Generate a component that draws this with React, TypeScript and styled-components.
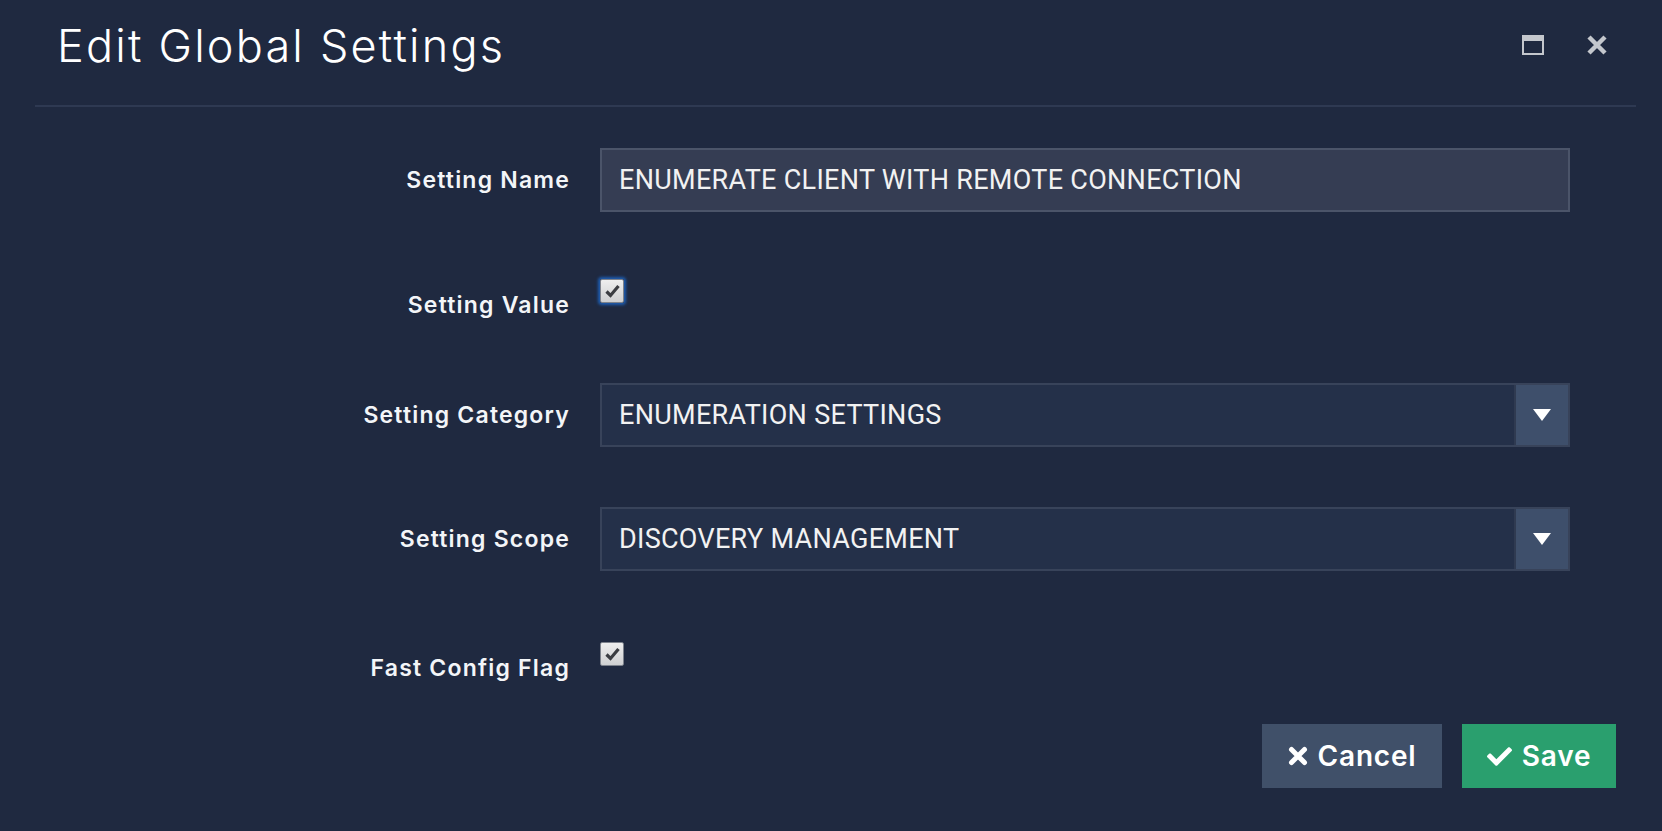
import { createGlobalStyle } from 'styled-components';
import styled from 'styled-components';
import { FaCheck } from 'react-icons/fa';

const GlobalStyle = createGlobalStyle`
  html, body {
    margin: 0;
    padding: 0;
    background: #1f2940;
  }
  #root {
    min-height: 100vh;
  }
`;

export default function App() {
  return (
    <>
      <GlobalStyle />
      <Modal>
        <Header>
          <Title>Edit Global Settings</Title>
          <HeaderTools>
            <ToolButton aria-label="maximize">
              <svg width="22" height="20" viewBox="0 0 22 20">
                <rect x="1" y="1" width="20" height="18" fill="none" stroke="#c4c7cd" strokeWidth="2" />
                <rect x="0" y="0" width="22" height="6" fill="#c4c7cd" />
              </svg>
            </ToolButton>
            <ToolButton aria-label="close">
              <svg width="22" height="20" viewBox="0 0 22 20">
                <path d="M3 2 L19 18 M19 2 L3 18" stroke="#c4c7cd" strokeWidth="4.5" strokeLinecap="butt" />
              </svg>
            </ToolButton>
          </HeaderTools>
        </Header>

        <Form>
          <Row>
            <Label>Setting Name</Label>
            <TextInput>ENUMERATE CLIENT WITH REMOTE CONNECTION</TextInput>
          </Row>
          <CheckRow>
            <CheckLabel>Setting Value</CheckLabel>
            <Checkbox focused />
          </CheckRow>
          <Row>
            <Label>Setting Category</Label>
            <Select value="ENUMERATION SETTINGS" />
          </Row>
          <Row>
            <Label>Setting Scope</Label>
            <Select value="DISCOVERY MANAGEMENT" />
          </Row>
          <CheckRow offset={4}>
            <CheckLabel>Fast Config Flag</CheckLabel>
            <Checkbox />
          </CheckRow>
        </Form>

        <Footer>
          <Button variant="cancel">
            <svg width="20" height="20" viewBox="0 0 20 20">
              <path d="M3.5 3.5 L16.5 16.5 M16.5 3.5 L3.5 16.5" stroke="#ffffff" strokeWidth="5" strokeLinecap="round" />
            </svg>
            Cancel
          </Button>
          <Button variant="save">
            <FaCheck size={25} />
            Save
          </Button>
        </Footer>
      </Modal>
    </>
  );
}

const Checkbox = ({ focused }: { focused?: boolean }) => (
  <CheckBox focused={focused}>
    <svg width="15" height="14" viewBox="0 0 15 14">
      <path d="M1.5 7.5 L5.5 11.5 L13.5 2" fill="none" stroke="#3b3d42" strokeWidth="3.2" />
    </svg>
  </CheckBox>
);

const Select = ({ value }: { value: string }) => (
  <SelectBox>
    <SelectValue>{value}</SelectValue>
    <SelectArrow>
      <svg width="18" height="12" viewBox="0 0 18 12">
        <path d="M0 0 H18 L9 12 Z" fill="#ffffff" />
      </svg>
    </SelectArrow>
  </SelectBox>
);

const Modal = styled.div`
  padding: 0 26px 0 35px;
  font-family: Inter, 'Noto Sans', sans-serif;
  color: #f3f5f8;
`;

const Header = styled.div`
  display: flex;
  align-items: flex-start;
  justify-content: space-between;
  height: 105px;
  padding: 0 28px 0 22px;
  border-bottom: 2px solid #2e3952;
`;

const Title = styled.h1`
  margin: 16px 0 0;
  font-size: 45px;
  line-height: 60px;
  font-weight: 300;
  color: #ffffff;
  letter-spacing: 2.2px;
`;

const HeaderTools = styled.div`
  display: flex;
  gap: 42px;
  margin-top: 35px;
`;

const ToolButton = styled.span`
  display: flex;
  width: 22px;
  height: 20px;
`;

const Form = styled.div`
  display: flex;
  flex-direction: column;
  gap: 60px;
  padding: 41px 66px 0 0;
`;

const Row = styled.div`
  display: grid;
  grid-template-columns: 535px 1fr;
  column-gap: 30px;
  align-items: center;
`;

const CheckRow = styled(Row)<{ offset?: number }>`
  align-items: flex-start;
  height: 51px;
  margin-top: ${(p) => p.offset ?? 0}px;
`;

const Label = styled.div`
  text-align: right;
  font-size: 23px;
  font-weight: 600;
  line-height: 26px;
  letter-spacing: 1.2px;
  color: #f3f5f8;
`;

const CheckLabel = styled(Label)`
  padding-top: 20px;
`;

const TextInput = styled.div`
  height: 60px;
  display: flex;
  align-items: center;
  padding: 0 17px;
  background: #353d53;
  border: 2px solid #4b5469;
  font-family: Roboto, sans-serif;
  font-size: 27px;
  letter-spacing: 0.3px;
  color: #f2f2f2;
`;

const SelectBox = styled.div`
  height: 60px;
  display: flex;
  background: #243049;
  border: 2px solid #38435a;
`;

const SelectValue = styled.div`
  flex: 1;
  display: flex;
  align-items: center;
  padding: 0 17px;
  font-family: Roboto, sans-serif;
  font-size: 27px;
  letter-spacing: 0.3px;
  color: #f2f2f2;
`;

const SelectArrow = styled.div`
  width: 52px;
  display: flex;
  align-items: center;
  justify-content: center;
  background: #3e4f6b;
  border-left: 2px solid #2f3a51;
`;

const CheckBox = styled.span<{ focused?: boolean }>`
  margin-top: 7px;
  width: 22px;
  height: 22px;
  display: flex;
  align-items: center;
  justify-content: center;
  border: 1px solid #7d828c;
  border-radius: 2px;
  background: linear-gradient(#eeeeee, #cfd0d2);
  box-shadow: ${(p) => (p.focused ? '0 0 3px 2px #1d5cb0' : 'none')};
`;

const Footer = styled.div`
  display: flex;
  justify-content: flex-end;
  gap: 20px;
  padding: 38px 20px 0 0;
`;

const Button = styled.button<{ variant: 'cancel' | 'save' }>`
  height: 64px;
  display: flex;
  align-items: center;
  justify-content: center;
  gap: 10px;
  border: none;
  padding: 0;
  width: ${(p) => (p.variant === 'cancel' ? '180px' : '154px')};
  background: ${(p) => (p.variant === 'cancel' ? '#405069' : '#2a9f6e')};
  color: #ffffff;
  font-family: Inter, 'Noto Sans', sans-serif;
  font-size: 28px;
  font-weight: 600;
  letter-spacing: 0.8px;
  cursor: pointer;
`;
